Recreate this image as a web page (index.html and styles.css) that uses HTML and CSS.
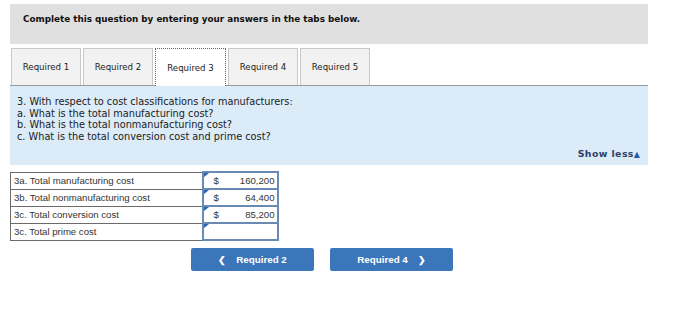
FILE: index.html
```html
<!DOCTYPE html>
<html>
<head>
<meta charset="utf-8">
<link rel="stylesheet" href="styles.css">
</head>
<body>
<div class="wrap">
  <div class="header">Complete this question by entering your answers in the tabs below.</div>
  <div class="tabs">
    <div class="tab">Required 1</div>
    <div class="tab">Required 2</div>
    <div class="tab active">Required 3</div>
    <div class="tab">Required 4</div>
    <div class="tab">Required 5</div>
  </div>
  <div class="panel">
    <div class="question">
      <div>3. With respect to cost classifications for manufacturers:</div>
      <div>a. What is the total manufacturing cost?</div>
      <div>b. What is the total nonmanufacturing cost?</div>
      <div>c. What is the total conversion cost and prime cost?</div>
    </div>
    <div class="showless">Show less<span class="tri">&#9650;</span></div>
  </div>
  <table class="grid">
    <tr><td class="lbl">3a. Total manufacturing cost</td><td class="inp"><span class="flag"></span><span class="cur">$</span><span class="val">160,200</span></td></tr>
    <tr><td class="lbl">3b. Total nonmanufacturing cost</td><td class="inp"><span class="flag"></span><span class="cur">$</span><span class="val">64,400</span></td></tr>
    <tr><td class="lbl">3c. Total conversion cost</td><td class="inp"><span class="flag"></span><span class="cur">$</span><span class="val">85,200</span></td></tr>
    <tr><td class="lbl">3c. Total prime cost</td><td class="inp"><span class="flag"></span><span class="cur"></span><span class="val"></span></td></tr>
  </table>
  <div class="nav">
    <div class="btn"><span class="chev">&#10094;</span>Required 2</div>
    <div class="btn">Required 4<span class="chev r">&#10095;</span></div>
  </div>
</div>
</body>
</html>
```
FILE: styles.css
```css
* { box-sizing: border-box; }
body {
  margin: 0;
  background: #fff;
  font-family: "DejaVu Sans", Verdana, sans-serif;
}
.wrap {
  width: 648px;
  padding: 4px 0 0 10px;
}
.header {
  height: 40px;
  background: #e0e0e0;
  padding: 10px 0 0 13px;
  font-size: 8.8px;
  font-weight: bold;
  color: #111;
}
.tabs {
  display: flex;
  gap: 2px;
  margin-top: 4px;
  padding-left: 1px;
  border-bottom: 1px solid #9a9a9a;
  height: 38px;
}
.tab {
  width: 70px;
  height: 37px;
  background: #f2f2f2;
  border: 1px solid #c8c8c8;
  border-bottom: none;
  font-size: 8.6px;
  color: #222;
  display: flex;
  align-items: center;
  justify-content: center;
}
.tab.active {
  width: 71px;
  height: 38px;
  background: #fff;
  border: 1px dotted #3e66a8;
  border-bottom: none;
  position: relative;
  z-index: 1;
}
.panel {
  background: #dbebf8;
  height: 79px;
  padding: 10px 0 0 7px;
  position: relative;
}
.question {
  font-size: 9.75px;
  line-height: 11.5px;
  color: #222;
}
.showless {
  position: absolute;
  right: 8px;
  bottom: 6px;
  font-size: 9.4px;
  font-weight: bold;
  color: #2f3f66;
  font-family: "DejaVu Sans", Verdana, sans-serif;
  letter-spacing: 0.4px;
}
.tri {
  font-size: 8px;
  color: #2a5aa0;
  margin-left: 0;
  letter-spacing: 0;
}
.grid {
  border-collapse: collapse;
  margin-top: 6px;
  font-family: "Liberation Sans", Arial, sans-serif;
  font-size: 9.6px;
  color: #333;
}
.grid td {
  height: 17px;
  padding: 0;
}
.lbl {
  width: 192px;
  border: 1px solid #6b6b6b;
  padding-left: 3px !important;
}
.inp {
  width: 75px;
  border: 2px solid #6a89b3;
  position: relative;
  background: #fff;
}
.inp .cur {
  position: absolute;
  left: 10px;
  top: 2px;
}
.inp .val {
  position: absolute;
  right: 2px;
  top: 2px;
}
.flag {
  position: absolute;
  left: 0;
  top: 0;
  width: 0;
  height: 0;
  border-top: 4px solid #2a63b5;
  border-right: 5px solid transparent;
}
.nav {
  display: flex;
  gap: 16px;
  margin: 7px 0 0 181px;
}
.btn {
  width: 123px;
  height: 23px;
  background: #3b76ba;
  border-radius: 2px;
  color: #fff;
  font-family: "Liberation Sans", Arial, sans-serif;
  font-weight: bold;
  font-size: 9.8px;
  display: flex;
  align-items: center;
  justify-content: center;
}
.chev {
  font-size: 9px;
  margin-right: 10px;
}
.chev.r {
  margin-right: 0;
  margin-left: 10px;
}
```
